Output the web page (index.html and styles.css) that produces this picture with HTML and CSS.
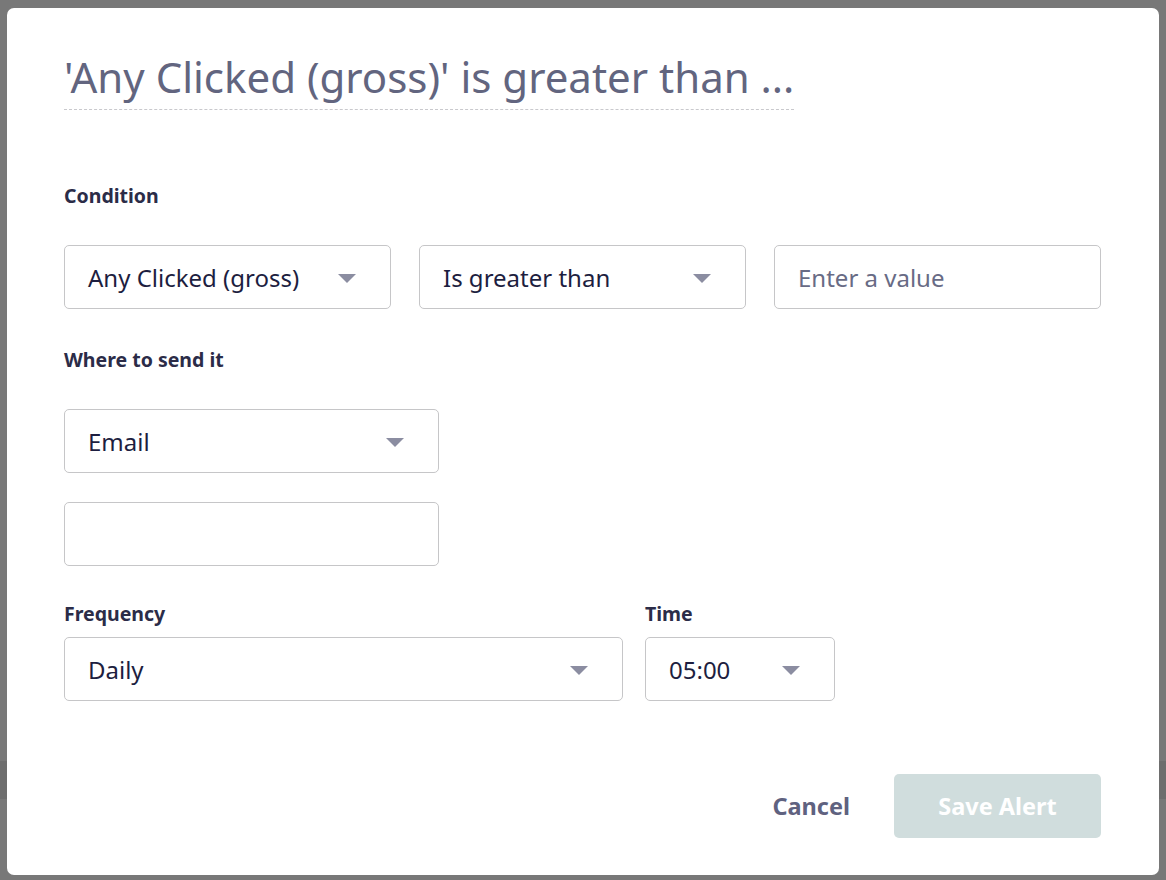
FILE: index.html
```html
<!DOCTYPE html>
<html lang="en">
<head>
<meta charset="utf-8">
<title>Alert</title>
<link rel="stylesheet" href="styles.css">
</head>
<body>
<div class="modal">
  <h1 class="title"><span class="title-text">'Any Clicked (gross)' is greater than ...</span></h1>

  <div class="label label-condition">Condition</div>
  <div class="row-three">
    <div class="field select"><span class="value">Any Clicked (gross)</span><span class="caret"></span></div>
    <div class="field select"><span class="value">Is greater than</span><span class="caret"></span></div>
    <div class="field"><span class="placeholder">Enter a value</span></div>
  </div>

  <div class="label label-where">Where to send it</div>
  <div class="field select narrow"><span class="value">Email</span><span class="caret"></span></div>
  <div class="field narrow second"></div>

  <div class="row-freq">
    <div class="col-freq">
      <div class="label label-small">Frequency</div>
      <div class="field select"><span class="value">Daily</span><span class="caret"></span></div>
    </div>
    <div class="col-time">
      <div class="label label-small">Time</div>
      <div class="field select"><span class="value">05:00</span><span class="caret"></span></div>
    </div>
  </div>

  <div class="actions">
    <button class="btn-cancel" type="button">Cancel</button>
    <button class="btn-save" type="button">Save Alert</button>
  </div>
</div>
</body>
</html>
```

FILE: styles.css
```css
html, body {
  margin: 0;
  padding: 0;
}

body {
  width: 1166px;
  height: 880px;
  overflow: hidden;
  background: linear-gradient(to bottom, #787878 0, #787878 761px, #6e6e6e 761px, #6e6e6e 799px, #787878 799px);
  font-family: "Noto Sans", "Open Sans", sans-serif;
}

.modal {
  box-sizing: border-box;
  margin: 8px 0 0 7px;
  width: 1152px;
  height: 867px;
  background: #ffffff;
  border-radius: 7px;
  padding: 45px 58px 0 57px;
}

.title {
  margin: 0;
  font-weight: 400;
  font-size: 42px;
  line-height: 48px;
  color: #62657f;
}

.title-text {
  display: inline-block;
  padding-bottom: 8px;
  border-bottom: 1px dashed #c9c9cd;
}

.label {
  font-weight: 700;
  font-size: 19.5px;
  line-height: 24px;
  color: #2b2c48;
}

.label-condition { margin-top: 74px; }
.label-where { margin-top: 39px; }

.row-three {
  margin-top: 37px;
  display: grid;
  grid-template-columns: 327px 327px 327px;
  column-gap: 28px;
}

.field {
  box-sizing: border-box;
  height: 64px;
  border: 1px solid #c6c6c8;
  border-radius: 5px;
  display: flex;
  align-items: center;
  padding: 0 0 0 23px;
  position: relative;
  background: #fff;
  font-size: 24px;
}

.value { color: #1d1e40; }
.placeholder { color: #686b85; }

.caret {
  position: absolute;
  right: 34px;
  top: 28px;
  width: 0;
  height: 0;
  border-left: 9px solid transparent;
  border-right: 9px solid transparent;
  border-top: 9px solid #8b8da1;
}

.narrow {
  width: 375px;
  margin-top: 37px;
}

.narrow.second { margin-top: 29px; }

.row-freq {
  margin-top: 36px;
  display: flex;
  gap: 22px;
}

.col-freq { width: 559px; }
.col-time { width: 190px; }

.label-small { margin-bottom: 11px; }

.actions {
  margin-top: 73px;
  display: flex;
  justify-content: flex-end;
  align-items: center;
  gap: 44px;
}

.btn-cancel {
  border: 0;
  background: transparent;
  padding: 0;
  font-family: inherit;
  font-weight: 700;
  font-size: 23.5px;
  color: #5f6280;
}

.btn-save {
  box-sizing: border-box;
  width: 207px;
  height: 64px;
  border: 0;
  border-radius: 5px;
  background: #d0dddd;
  color: #ffffff;
  font-family: inherit;
  font-weight: 700;
  font-size: 23.5px;
}
```
